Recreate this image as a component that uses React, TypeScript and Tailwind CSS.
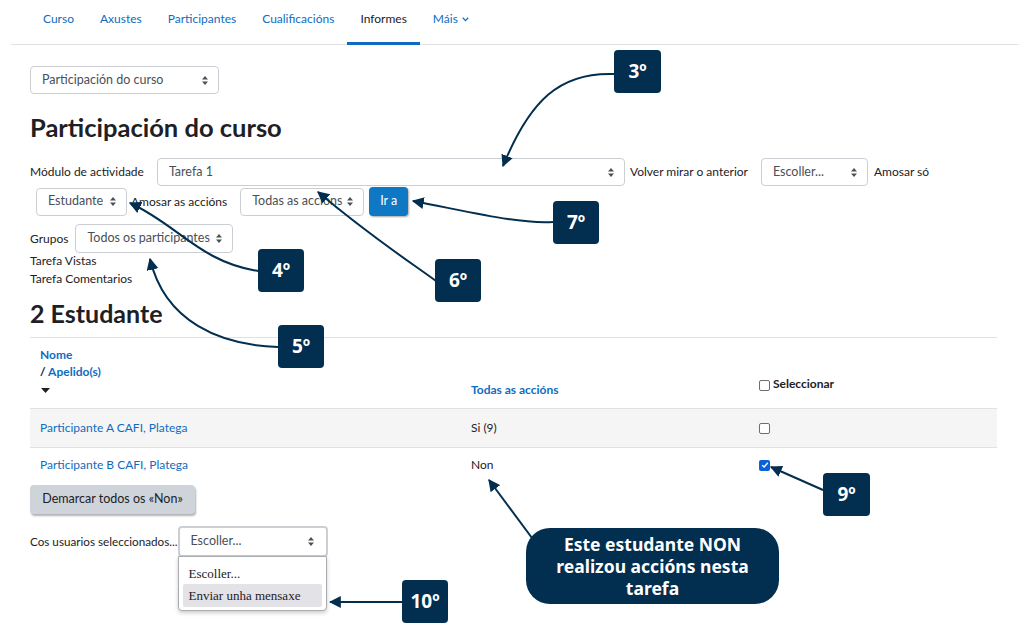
import React from 'react';

const NAVY = '#022e4f';

const navItems = ['Curso', 'Axustes', 'Participantes', 'Cualificacións', 'Informes', 'Máis'];

function UpDown() {
  return (
    <svg width="6" height="9" viewBox="0 0 6 9" className="shrink-0">
      <path d="M0 3.5 L3 0 L6 3.5 Z" fill="#495057" />
      <path d="M0 5.5 L3 9 L6 5.5 Z" fill="#495057" />
    </svg>
  );
}

function Select({ label, className = '' }: { label: string; className?: string }) {
  return (
    <div
      className={`flex items-center justify-between h-[28px] border border-[#cbcfd3] rounded-[4px] bg-white pl-[11px] pr-[10px] text-[12.5px] text-[#495057] ${className}`}
    >
      <span className="whitespace-nowrap">{label}</span>
      <UpDown />
    </div>
  );
}

function Box({ children, className = '' }: { children: React.ReactNode; className?: string }) {
  return (
    <div
      className={`absolute flex items-center justify-center rounded-[4px] bg-[#022e4f] text-white font-bold text-[19px] ${className}`}
      style={{ fontFamily: '"Noto Sans", "Open Sans", sans-serif' }}
    >
      {children}
    </div>
  );
}

function Annotations() {
  return (
    <>
      <svg className="absolute inset-0 pointer-events-none" width="1019" height="631" viewBox="0 0 1019 631">
        <defs>
          <marker id="ah" viewBox="0 0 10 10" refX="9" refY="5" markerWidth="6" markerHeight="6" orient="auto" markerUnits="strokeWidth">
            <path d="M0 0 L10 5 L0 10 Z" fill={NAVY} />
          </marker>
        </defs>
        <g fill="none" stroke={NAVY} strokeWidth="2" markerEnd="url(#ah)">
          <path d="M614 74 C560 72 530 100 503 166" />
          <path d="M553 222 C520 224 480 214 413 201" />
          <path d="M258 271 C200 262 178 225 130 203" />
          <path d="M436 281 C410 262 370 236 318 192" />
          <path d="M278 347 C220 345 165 322 150 259" />
          <path d="M823 490 L771 467" />
          <path d="M402 602 L330 602" />
          <path d="M532 538 L489 480" />
        </g>
      </svg>
      <Box className="left-[614px] top-[50px] w-[47px] h-[43px]">3º</Box>
      <Box className="left-[553px] top-[201px] w-[46px] h-[43px]">7º</Box>
      <Box className="left-[258px] top-[249px] w-[46px] h-[43px]">4º</Box>
      <Box className="left-[435px] top-[259px] w-[46px] h-[43px]">6º</Box>
      <Box className="left-[278px] top-[325px] w-[46px] h-[43px]">5º</Box>
      <Box className="left-[823px] top-[473px] w-[47px] h-[43px]">9º</Box>
      <Box className="left-[402px] top-[580px] w-[46px] h-[43px]">10º</Box>
      <div
        className="absolute left-[526px] top-[528px] w-[253px] h-[76px] rounded-[24px] bg-[#022e4f] text-white font-bold text-[17.5px] leading-[22px] flex items-center justify-center text-center"
        style={{ fontFamily: '"Noto Sans", "Open Sans", sans-serif' }}
      >
        Este estudante NON
        <br />
        realizou accións nesta
        <br />
        tarefa
      </div>
    </>
  );
}

function Checkbox({ checked = false }: { checked?: boolean }) {
  return checked ? (
    <span className="inline-flex items-center justify-center w-[11px] h-[11px] rounded-[2px] bg-[#0b62d6]">
      <svg width="8" height="8" viewBox="0 0 8 8">
        <path d="M1.2 4.2 L3.2 6 L6.8 1.8" fill="none" stroke="white" strokeWidth="1.4" />
      </svg>
    </span>
  ) : (
    <span className="inline-block w-[11px] h-[11px] rounded-[2px] border border-[#6b6f74] bg-white" />
  );
}

export default function App() {
  return (
    <div
      className="relative w-[1019px] h-[631px] overflow-hidden bg-white text-[#1d2125]"
      style={{ fontFamily: 'Lato, "Liberation Sans", sans-serif' }}
    >
      {/* secondary nav */}
      <div className="ml-[11px] border-b border-[#dee2e6]">
        <ul className="flex pl-[19px] text-[12px] leading-[16px]">
          {navItems.map((n) => (
            <li
              key={n}
              className={`px-[13px] h-[45px] pt-[11px] -mb-px border-b-[3px] flex items-start gap-1 ${
                n === 'Informes' ? 'border-[#0f6cbf] text-[#1d2125]' : 'border-transparent text-[#0f6cbf]'
              }`}
            >
              {n}
              {n === 'Máis' && (
                <svg width="7" height="5" viewBox="0 0 7 5" className="mt-[6px]">
                  <path d="M0.8 0.8 L3.5 3.6 L6.2 0.8" fill="none" stroke="#0f6cbf" strokeWidth="1.3" />
                </svg>
              )}
            </li>
          ))}
        </ul>
      </div>

      <div className="pl-[30px] pr-[22px]">
        <Select label="Participación do curso" className="mt-[21px] w-[189px]" />

        <h2 className="mt-[17px] text-[25.5px] leading-[32px] font-bold">Participación do curso</h2>

        {/* form */}
        <div className="mt-[15px] text-[12px]">
          <div className="flex items-center">
            <span>Módulo de actividade</span>
            <Select label="Tarefa 1" className="ml-[13px] w-[468px]" />
            <span className="ml-[5px]">Volver mirar o anterior</span>
            <Select label="Escoller..." className="ml-[13px] w-[107px]" />
            <span className="ml-[6px]">Amosar só</span>
          </div>
          <div className="flex items-center mt-px">
            <Select label="Estudante" className="ml-[6px] w-[91px]" />
            <span className="ml-[4px]">Amosar as accións</span>
            <Select label="Todas as accións" className="ml-[13px] w-[124px]" />
            <button className="ml-[5px] h-[29px] w-[39px] rounded-[4px] bg-[#0f78c4] text-white text-[12.5px] shadow-[1px_1px_2px_rgba(0,0,0,0.35)]">
              Ir a
            </button>
          </div>
          <div className="flex items-center mt-[8px]">
            <span>Grupos</span>
            <Select label="Todos os participantes" className="ml-[7px] w-[158px] h-[29px]" />
          </div>
          <div className="leading-[18px] mt-[-1px]">
            <div>Tarefa Vistas</div>
            <div>Tarefa Comentarios</div>
          </div>
        </div>

        <h3 className="mt-[11px] text-[25px] leading-[28px] font-bold">2 Estudante</h3>

        {/* table */}
        <div className="mt-[10px] w-[967px] text-[12px]">
          <div className="grid grid-cols-[431px_288px_248px] border-t border-b border-[#dee2e6] h-[72px]">
            <div className="pl-[10px] pt-[8px] leading-[17px] font-bold text-[#0f6cbf]">
              <div>Nome</div>
              <div>
                <span className="text-[#1d2125]">/</span> Apelido(s)
              </div>
              <svg width="9" height="5" viewBox="0 0 9 5" className="mt-[8px] ml-[1px]">
                <path d="M0 0 L9 0 L4.5 5 Z" fill="#1d2125" />
              </svg>
            </div>
            <div className="pl-[10px] flex items-end pb-[9px] font-bold text-[#0f6cbf]">Todas as accións</div>
            <div className="pl-[10px] pt-[37px] flex items-start gap-[3px] font-bold">
              <span className="mt-[3px]">
                <Checkbox />
              </span>
              Seleccionar
            </div>
          </div>
          <div className="grid grid-cols-[431px_288px_248px] h-[39px] items-center bg-[#f5f5f5] border-b border-[#dee2e6]">
            <div className="pl-[10px] text-[#0f6cbf]">Participante A CAFI, Platega</div>
            <div className="pl-[10px]">Si (9)</div>
            <div className="pl-[10px] flex">
              <Checkbox />
            </div>
          </div>
          <div className="grid grid-cols-[431px_288px_248px] h-[34px] items-center">
            <div className="pl-[10px] text-[#0f6cbf]">Participante B CAFI, Platega</div>
            <div className="pl-[10px]">Non</div>
            <div className="pl-[10px] flex">
              <Checkbox checked />
            </div>
          </div>
        </div>

        <button className="mt-[3px] h-[29px] w-[165px] rounded-[4px] bg-[#ced4da] text-[12.5px] text-[#1d2125] shadow-[1px_2px_2px_rgba(0,0,0,0.3)]">
          Demarcar todos os «Non»
        </button>

        <div className="mt-[12px] flex items-center text-[11.7px]">
          <span>Cos usuarios seleccionados...</span>
          <div className="relative ml-0">
            <Select label="Escoller..." className="w-[150px] h-[31px] border-2 border-[#6aa6e0] rounded-[2px] pl-[10px] pr-[12px]" />
            <div
              className="absolute left-0 top-[30px] w-[149px] h-[55px] bg-white border border-[#a8acb0] rounded-b-[4px] shadow-[0_2px_4px_rgba(0,0,0,0.2)] px-[4px] pt-[7px] text-[13px] text-[#1d2125]"
              style={{ fontFamily: '"Liberation Serif", serif' }}
            >
              <div className="h-[20px] leading-[20px] px-[6px]">Escoller...</div>
              <div className="h-[23px] leading-[23px] px-[6px] bg-[#e2e2e7] rounded-[2px]">Enviar unha mensaxe</div>
            </div>
          </div>
        </div>
      </div>

      <Annotations />
    </div>
  );
}
